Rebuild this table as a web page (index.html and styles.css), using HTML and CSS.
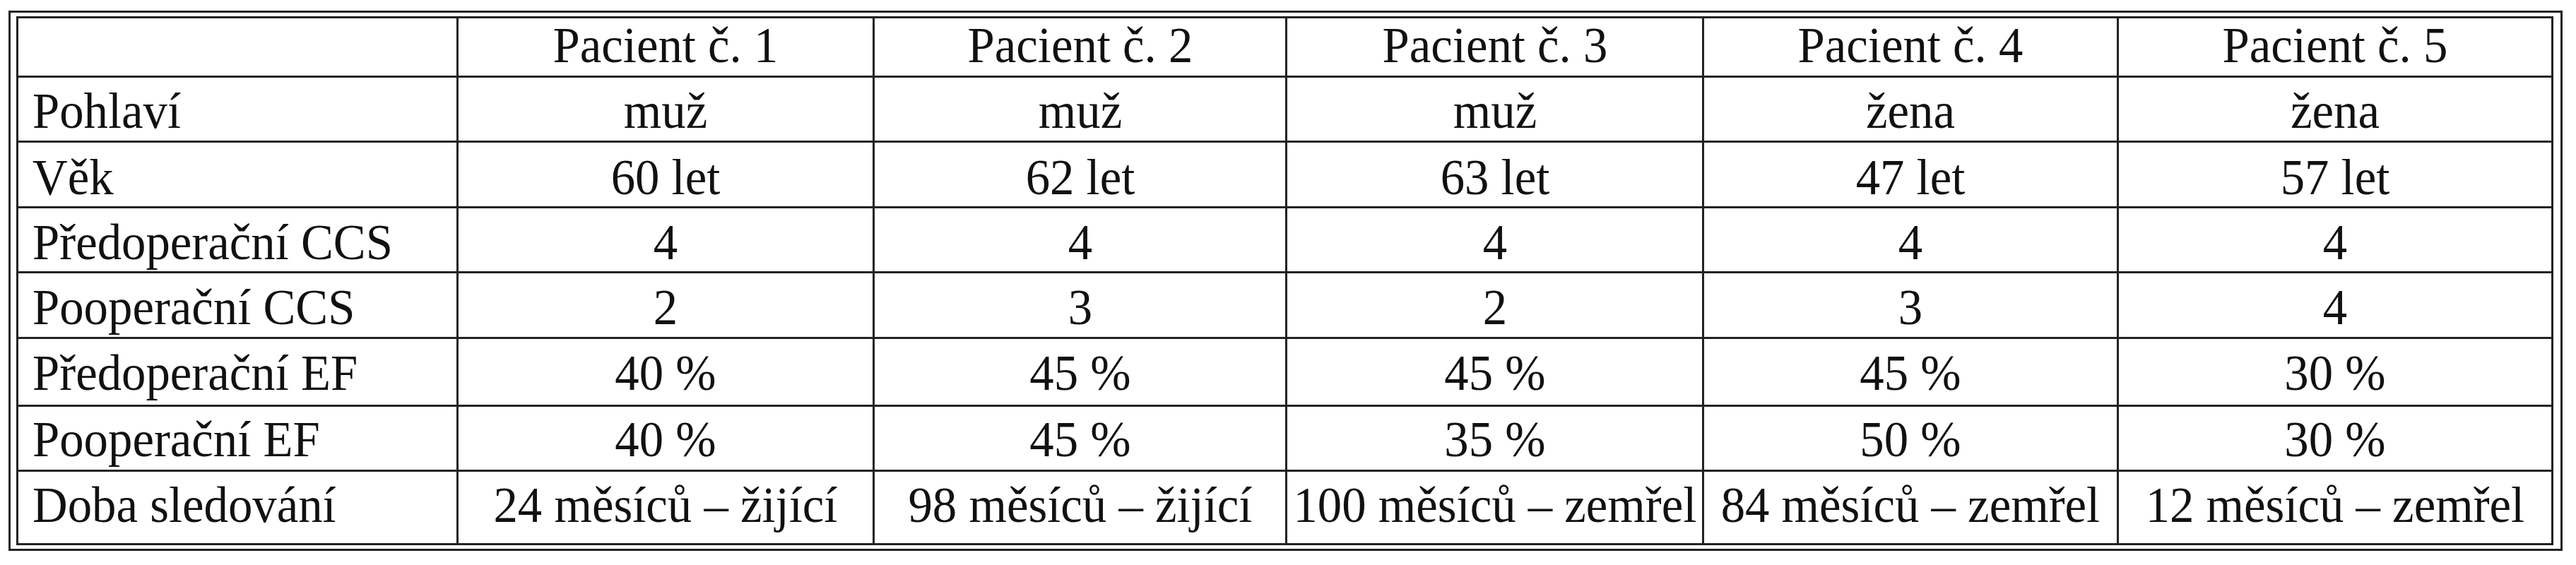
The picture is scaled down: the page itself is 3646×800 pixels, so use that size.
FILE: index.html
```html
<!DOCTYPE html>
<html lang="cs">
<head>
<meta charset="utf-8">
<title>Pacienti</title>
<link rel="stylesheet" href="styles.css">
</head>
<body>
<div class="frame">
  <div class="grid" role="table">
    <div class="cell label head"></div>
    <div class="cell head"><span class="t">Pacient č. 1</span></div>
    <div class="cell head"><span class="t">Pacient č. 2</span></div>
    <div class="cell head"><span class="t">Pacient č. 3</span></div>
    <div class="cell head"><span class="t">Pacient č. 4</span></div>
    <div class="cell head last"><span class="t">Pacient č. 5</span></div>

    <div class="cell label r1"><span class="t">Pohlaví</span></div>
    <div class="cell r1"><span class="t">muž</span></div>
    <div class="cell r1"><span class="t">muž</span></div>
    <div class="cell r1"><span class="t">muž</span></div>
    <div class="cell r1"><span class="t">žena</span></div>
    <div class="cell r1 last"><span class="t">žena</span></div>

    <div class="cell label r2"><span class="t">Věk</span></div>
    <div class="cell r2"><span class="t">60 let</span></div>
    <div class="cell r2"><span class="t">62 let</span></div>
    <div class="cell r2"><span class="t">63 let</span></div>
    <div class="cell r2"><span class="t">47 let</span></div>
    <div class="cell r2 last"><span class="t">57 let</span></div>

    <div class="cell label r3"><span class="t">Předoperační CCS</span></div>
    <div class="cell r3"><span class="t">4</span></div>
    <div class="cell r3"><span class="t">4</span></div>
    <div class="cell r3"><span class="t">4</span></div>
    <div class="cell r3"><span class="t">4</span></div>
    <div class="cell r3 last"><span class="t">4</span></div>

    <div class="cell label r4"><span class="t">Pooperační CCS</span></div>
    <div class="cell r4"><span class="t">2</span></div>
    <div class="cell r4"><span class="t">3</span></div>
    <div class="cell r4"><span class="t">2</span></div>
    <div class="cell r4"><span class="t">3</span></div>
    <div class="cell r4 last"><span class="t">4</span></div>

    <div class="cell label r5"><span class="t">Předoperační EF</span></div>
    <div class="cell r5"><span class="t">40 %</span></div>
    <div class="cell r5"><span class="t">45 %</span></div>
    <div class="cell r5"><span class="t">45 %</span></div>
    <div class="cell r5"><span class="t">45 %</span></div>
    <div class="cell r5 last"><span class="t">30 %</span></div>

    <div class="cell label r6"><span class="t">Pooperační EF</span></div>
    <div class="cell r6"><span class="t">40 %</span></div>
    <div class="cell r6"><span class="t">45 %</span></div>
    <div class="cell r6"><span class="t">35 %</span></div>
    <div class="cell r6"><span class="t">50 %</span></div>
    <div class="cell r6 last"><span class="t">30 %</span></div>

    <div class="cell label r7 bottom"><span class="t">Doba sledování</span></div>
    <div class="cell r7 bottom"><span class="t">24 měsíců – žijící</span></div>
    <div class="cell r7 bottom"><span class="t">98 měsíců – žijící</span></div>
    <div class="cell r7 bottom"><span class="t">100 měsíců – zemřel</span></div>
    <div class="cell r7 bottom"><span class="t">84 měsíců – zemřel</span></div>
    <div class="cell r7 bottom last"><span class="t">12 měsíců – zemřel</span></div>
  </div>
</div>
</body>
</html>
```

FILE: styles.css
```css
html, body {
  margin: 0;
  padding: 0;
  background: #ffffff;
}

body {
  font-family: "Liberation Serif", "Times New Roman", serif;
  color: #111111;
}

.frame {
  display: inline-block;
  margin: 15px 0 0 12px;
  border: 3px solid #222222;
  padding: 5px 10px 5px 8px;
}

.grid {
  display: grid;
  grid-template-columns: 623px 589px 584px 590px 587px 612px;
  grid-template-rows: 84px 92px 93px 92px 93px 96px 92px 101px;
  border: 3px solid #222222;
  width: max-content;
}

.cell {
  box-sizing: border-box;
  display: flex;
  justify-content: center;
  align-items: flex-start;
  border-right: 3px solid #222222;
  border-bottom: 3px solid #222222;
  font-size: 72px;
  line-height: 70px;
  white-space: nowrap;
  padding-top: 12px;
}

.t {
  display: inline-block;
  transform: scaleX(0.955);
  transform-origin: center top;
}

.cell.last {
  border-right: none;
}

.cell.bottom {
  border-bottom: none;
}

.cell.label {
  justify-content: flex-start;
  padding-left: 20px;
}

.cell.label .t {
  transform-origin: left top;
}

.cell.head { padding-top: 3px; }
.cell.r1 { padding-top: 12px; }
.cell.r2 { padding-top: 14px; }
.cell.r3 { padding-top: 13px; }
.cell.r4 { padding-top: 13px; }
.cell.r5 { padding-top: 13px; }
.cell.r6 { padding-top: 11px; }
.cell.r7 { padding-top: 12px; }
```
